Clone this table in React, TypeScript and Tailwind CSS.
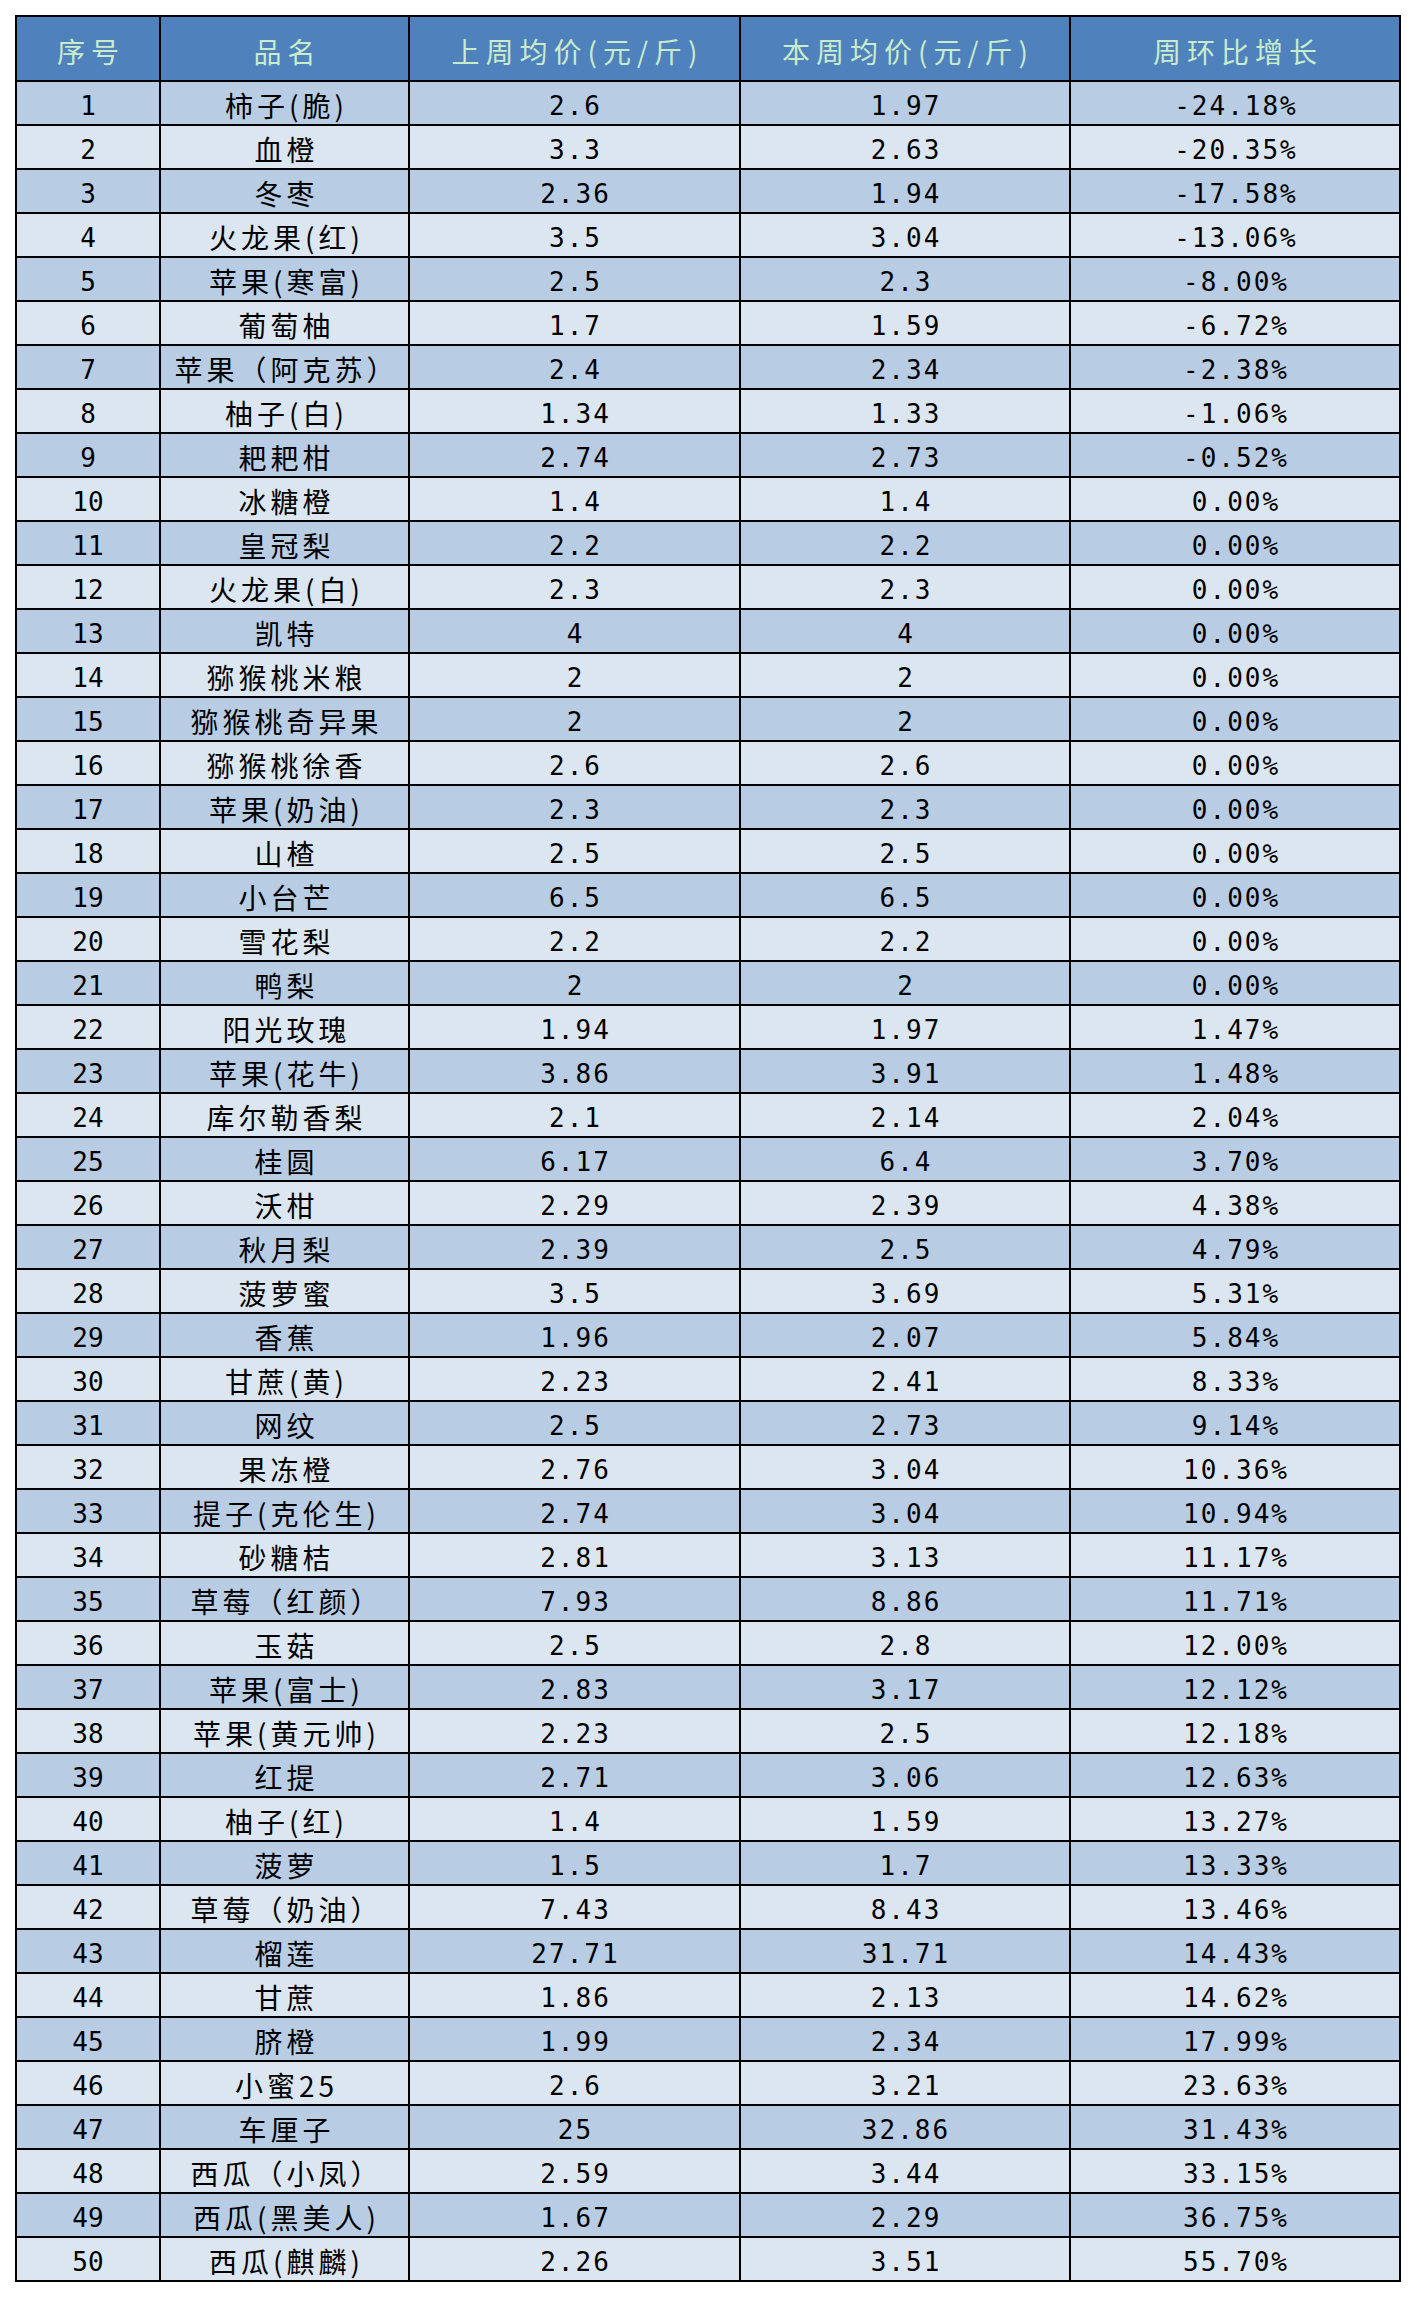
import React from 'react';

const rows: [string, string, string, string][] = [
  ['柿子(脆)', '2.6', '1.97', '-24.18%'],
  ['血橙', '3.3', '2.63', '-20.35%'],
  ['冬枣', '2.36', '1.94', '-17.58%'],
  ['火龙果(红)', '3.5', '3.04', '-13.06%'],
  ['苹果(寒富)', '2.5', '2.3', '-8.00%'],
  ['葡萄柚', '1.7', '1.59', '-6.72%'],
  ['苹果（阿克苏）', '2.4', '2.34', '-2.38%'],
  ['柚子(白)', '1.34', '1.33', '-1.06%'],
  ['耙耙柑', '2.74', '2.73', '-0.52%'],
  ['冰糖橙', '1.4', '1.4', '0.00%'],
  ['皇冠梨', '2.2', '2.2', '0.00%'],
  ['火龙果(白)', '2.3', '2.3', '0.00%'],
  ['凯特', '4', '4', '0.00%'],
  ['猕猴桃米粮', '2', '2', '0.00%'],
  ['猕猴桃奇异果', '2', '2', '0.00%'],
  ['猕猴桃徐香', '2.6', '2.6', '0.00%'],
  ['苹果(奶油)', '2.3', '2.3', '0.00%'],
  ['山楂', '2.5', '2.5', '0.00%'],
  ['小台芒', '6.5', '6.5', '0.00%'],
  ['雪花梨', '2.2', '2.2', '0.00%'],
  ['鸭梨', '2', '2', '0.00%'],
  ['阳光玫瑰', '1.94', '1.97', '1.47%'],
  ['苹果(花牛)', '3.86', '3.91', '1.48%'],
  ['库尔勒香梨', '2.1', '2.14', '2.04%'],
  ['桂圆', '6.17', '6.4', '3.70%'],
  ['沃柑', '2.29', '2.39', '4.38%'],
  ['秋月梨', '2.39', '2.5', '4.79%'],
  ['菠萝蜜', '3.5', '3.69', '5.31%'],
  ['香蕉', '1.96', '2.07', '5.84%'],
  ['甘蔗(黄)', '2.23', '2.41', '8.33%'],
  ['网纹', '2.5', '2.73', '9.14%'],
  ['果冻橙', '2.76', '3.04', '10.36%'],
  ['提子(克伦生)', '2.74', '3.04', '10.94%'],
  ['砂糖桔', '2.81', '3.13', '11.17%'],
  ['草莓（红颜）', '7.93', '8.86', '11.71%'],
  ['玉菇', '2.5', '2.8', '12.00%'],
  ['苹果(富士)', '2.83', '3.17', '12.12%'],
  ['苹果(黄元帅)', '2.23', '2.5', '12.18%'],
  ['红提', '2.71', '3.06', '12.63%'],
  ['柚子(红)', '1.4', '1.59', '13.27%'],
  ['菠萝', '1.5', '1.7', '13.33%'],
  ['草莓（奶油）', '7.43', '8.43', '13.46%'],
  ['榴莲', '27.71', '31.71', '14.43%'],
  ['甘蔗', '1.86', '2.13', '14.62%'],
  ['脐橙', '1.99', '2.34', '17.99%'],
  ['小蜜25', '2.6', '3.21', '23.63%'],
  ['车厘子', '25', '32.86', '31.43%'],
  ['西瓜（小凤）', '2.59', '3.44', '33.15%'],
  ['西瓜(黑美人)', '1.67', '2.29', '36.75%'],
  ['西瓜(麒麟)', '2.26', '3.51', '55.70%'],
];

const headers = ['序号', '品名', '上周均价(元/斤)', '本周均价(元/斤)', '周环比增长'];

const cjk = "font-['Noto_Sans_CJK_SC','Noto_Sans',sans-serif]";
const num = "font-['DejaVu_Sans_Mono','Liberation_Mono',monospace]";

export default function App() {
  return (
    <div className="min-h-[2298px] bg-white pt-[15px] pl-[15px]">
      <div className="grid w-fit grid-cols-[142px_247px_329px_328px_328px] gap-[2px] bg-black p-[2px]">
        {headers.map((h) => (
          <div
            key={h}
            className={`flex h-[63px] items-center justify-center bg-[#4f81bd] pt-[5px] pl-[6px] text-[28px] tracking-[6px] text-[#c8eccb] ${cjk}`}
          >
            {h}
          </div>
        ))}
        {rows.map(([name, last, cur, pct], i) => {
          const bg = i % 2 === 0 ? 'bg-[#b8cce4]' : 'bg-[#dce6f1]';
          return (
            <React.Fragment key={i}>
              <div className={`flex h-[42px] items-center justify-center pt-[6px] text-[26px] text-black ${bg} ${num}`}>
                {i + 1}
              </div>
              <div className={`flex h-[42px] items-center justify-center pt-[4px] pl-[4px] text-[28px] tracking-[4px] text-black ${bg} ${cjk}`}>
                {name}
              </div>
              <div className={`flex h-[42px] items-center justify-center pt-[6px] pl-[2px] text-[26px] tracking-[2px] text-black ${bg} ${num}`}>
                {last}
              </div>
              <div className={`flex h-[42px] items-center justify-center pt-[6px] pl-[2px] text-[26px] tracking-[2px] text-black ${bg} ${num}`}>
                {cur}
              </div>
              <div className={`flex h-[42px] items-center justify-center pt-[6px] pl-[2px] text-[26px] tracking-[2px] text-black ${bg} ${num}`}>
                {pct}
              </div>
            </React.Fragment>
          );
        })}
      </div>
    </div>
  );
}
